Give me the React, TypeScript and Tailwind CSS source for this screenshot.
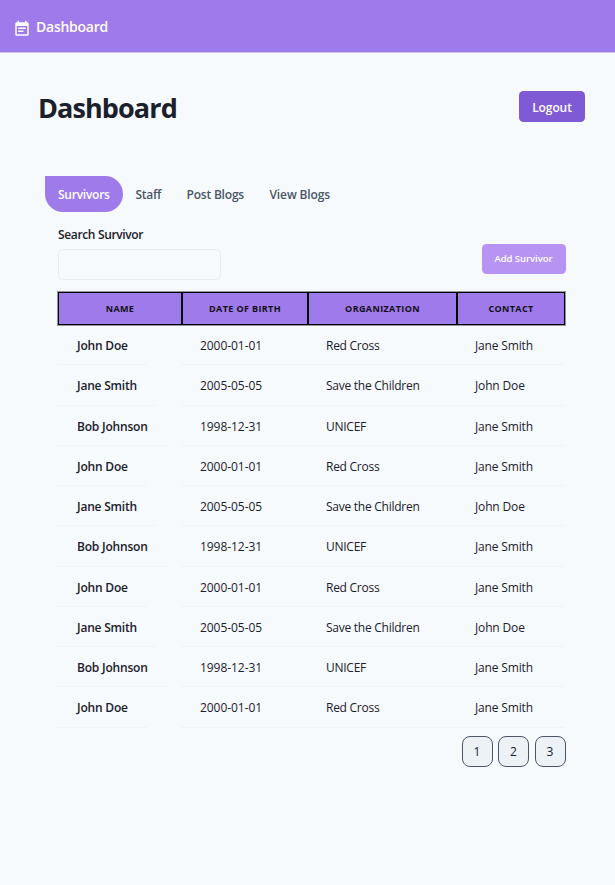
import { MdEventNote } from "react-icons/md";

const people = [
  { name: "John Doe", birth: "2000-01-01", org: "Red Cross", contact: "Jane Smith" },
  { name: "Jane Smith", birth: "2005-05-05", org: "Save the Children", contact: "John Doe" },
  { name: "Bob Johnson", birth: "1998-12-31", org: "UNICEF", contact: "Jane Smith" },
];
const rows = Array.from({ length: 10 }, (_, i) => people[i % 3]);

function Header() {
  const cell = "flex items-center justify-center border-r-2 border-black pt-px";
  return (
    <div className="grid h-[33px] w-[507px] grid-cols-[124px_126px_149px_106px] border border-black bg-[#9f7aea] text-[9px] font-bold tracking-[0.38px] text-[#111018] outline outline-1 outline-black/40">
      <div className={cell}>NAME</div>
      <div className={cell}>DATE OF BIRTH</div>
      <div className={cell}>ORGANIZATION</div>
      <div className="flex items-center justify-center pt-px">CONTACT</div>
    </div>
  );
}

export default function App() {
  const tab = "flex h-9 items-center pl-[13px] pt-px text-[12px] font-semibold text-[#4a5568]";
  const cell = "flex items-center border-b border-[#edf2f7]/80 pl-[19px] pt-[2px]";
  return (
    <div className="h-[885px] w-[615px] overflow-hidden bg-[#f7fafc] font-['Open_Sans','Noto_Sans',sans-serif] text-[#1a202c]">
      <header className="flex h-[53px] items-center border-b border-[#d1c0f5] bg-[#9f7aea] pl-[13px] text-white">
        <MdEventNote className="mt-[5px] size-[18px]" />
        <span className="ml-[5px] text-[14px] font-semibold tracking-[-0.25px]">Dashboard</span>
      </header>

      <div className="flex items-start justify-between pl-[38px] pr-[30px] pt-[38px]">
        <h1 className="text-[27px] font-bold leading-[34px] tracking-[-0.9px]">Dashboard</h1>
        <button className="h-[31px] w-[66px] rounded-[4.5px] bg-[#805ad5] pt-[2px] text-[12px] font-semibold tracking-[-0.1px] text-white">Logout</button>
      </div>

      <nav className="mt-[51px] flex pl-[45px]">
        <div className="flex h-9 w-[77.5px] items-center rounded-[18px] rounded-tl-none bg-[#9f7aea] pl-[13px] pt-[2px] text-[12px] font-semibold tracking-[-0.25px] text-white">Survivors</div>
        <div className={`${tab} w-[51px] tracking-[-0.3px]`}>Staff</div>
        <div className={`${tab} w-[83px] tracking-[-0.2px]`}>Post Blogs</div>
        <div className={`${tab} w-[86px] tracking-[-0.12px]`}>View Blogs</div>
      </nav>

      <main className="ml-[58px] w-[508px] pt-[14px]">
        <div className="flex items-end justify-between">
          <label className="text-[12px] font-semibold leading-[18px] tracking-[-0.35px]">
            <span>Search Survivor</span>
            <input className="mt-[5px] block h-[31px] w-[163px] rounded-[4.5px] border border-[#e2e8f0]/80 bg-transparent" />
          </label>
          <button className="mb-[6px] mr-[0.5px] h-[30.5px] w-[84px] rounded-[4.5px] bg-[#b794f4] pt-px text-[9.5px] font-semibold tracking-[-0.05px] text-white">Add Survivor</button>
        </div>

        <div className="mt-[12px]">
          <Header />
          {rows.map((row, i) => (
            <div key={i} className="grid h-[40.25px] grid-cols-[123px_126px_149px_109px] text-[12px]">
              <div className="flex">
                <div className="flex items-center border-b border-[#edf2f7]/80 px-[19px] pt-[3px] font-semibold tracking-[-0.2px]">{row.name}</div>
              </div>
              <div className={`${cell} pt-[3px] tracking-[-0.05px]`}>{row.birth}</div>
              <div className={`${cell} pt-[3px] tracking-[-0.26px]`}>{row.org}</div>
              <div className={`${cell} pt-[3px] tracking-[-0.15px]`}>{row.contact}</div>
            </div>
          ))}
        </div>

        <div className="mt-[8px] flex justify-end gap-[5.5px] pr-[0.5px]">
          {[1, 2, 3].map((page) => (
            <button key={page} className="h-[31px] w-[31px] rounded-[8px] border border-[#4a5568] bg-[#edf2f7] pt-[2px] text-[12px] font-medium">{page}</button>
          ))}
        </div>
      </main>
    </div>
  );
}
